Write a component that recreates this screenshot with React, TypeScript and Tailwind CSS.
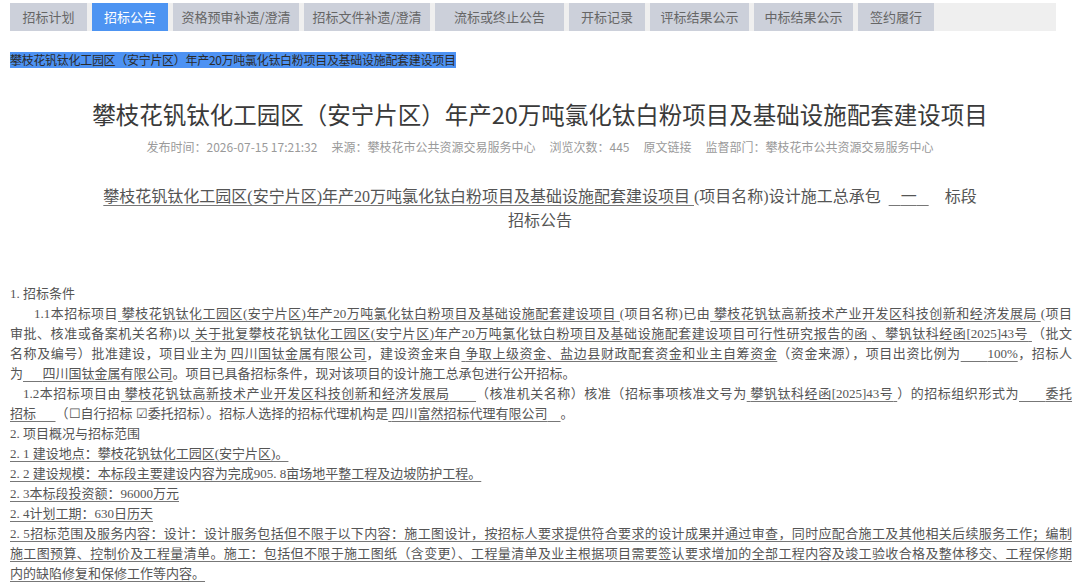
import React from 'react';

const tabs = [
  { label: '招标计划', w: 'w-[77px]' },
  { label: '招标公告', w: 'w-[76px]', active: true },
  { label: '资格预审补遗/澄清', w: 'w-[126px]' },
  { label: '招标文件补遗/澄清', w: 'w-[126px]' },
  { label: '流标或终止公告', w: 'w-[129px]' },
  { label: '开标记录', w: 'w-[76px]' },
  { label: '评标结果公示', w: 'w-[99px]' },
  { label: '中标结果公示', w: 'w-[99px]' },
  { label: '签约履行', w: 'w-[76px]' },
];

const sans = "font-['Microsoft_YaHei','Noto_Sans_CJK_SC',sans-serif]";

// underlined span, as in the original document
const U = ({ children }: { children: React.ReactNode }) => (
  <span className="underline decoration-[#777] decoration-1 underline-offset-[3px]">{children}</span>
);

const Line = ({ children, full = false, indent = '' }: { children: React.ReactNode; full?: boolean; indent?: string }) => (
  <div className={`${full ? 'text-justify [text-align-last:justify]' : ''} ${indent}`}>{children}</div>
);

const sp = (n: number) => '\u00a0'.repeat(n);

const App = () => {
  return (
    <div className="w-[1080px] h-[585px] overflow-hidden bg-white">
      {/* Tabs */}
      <div className={`mt-[3px] ml-[10px] w-[1046px] h-[28px] bg-[#efefef] flex gap-[5px] ${sans}`}>
        {tabs.map((t) => (
          <div
            key={t.label}
            className={`${t.w} h-full flex items-center justify-center text-[13px] ${
              t.active ? 'bg-[#4d94f2] text-white' : 'bg-[#ccd0da] text-[#666]'
            }`}
          >
            {t.label}
          </div>
        ))}
      </div>

      {/* Selected breadcrumb title */}
      <div className={`mt-[21px] ml-[10px] h-[16px] leading-[16px] flex ${sans}`}>
        <span className="bg-[#4d92f3] text-[#2b2b2b] text-[12px] leading-[16px] h-[16px] tracking-[-0.3px]">
          攀枝花钒钛化工园区（安宁片区）年产20万吨氯化钛白粉项目及基础设施配套建设项目
        </span>
      </div>

      {/* Heading */}
      <h1 className={`mt-[30px] text-center text-[23.5px] leading-[32px] text-[#3a3a3a] ${sans}`}>
        攀枝花钒钛化工园区（安宁片区）年产20万吨氯化钛白粉项目及基础设施配套建设项目
      </h1>
      <div className={`mt-[8px] text-[12px] leading-[18px] text-[#9a9a9a] flex justify-center gap-[14px] ${sans}`}>
        <span>发布时间：2026-07-15 17:21:32</span>
        <span>来源：攀枝花市公共资源交易服务中心</span>
        <span>浏览次数：445</span>
        <span>原文链接</span>
        <span>监督部门：攀枝花市公共资源交易服务中心</span>
      </div>

      {/* Document */}
      <div className="font-['SimSun','Liberation_Serif','Noto_Sans_CJK_SC',serif] text-[#555]">
        <div className="mt-[29px] text-center text-[16px] leading-[24px]">
          <div>
            <U>攀枝花钒钛化工园区(安宁片区)年产20万吨氯化钛白粉项目及基础设施配套建设项目{sp(1)}</U>
            (项目名称)设计施工总承包{sp(2)}
            <U>{sp(3)}一{sp(3)}</U>
            {sp(4)}标段
          </div>
          <div>招标公告</div>
        </div>

        <div className="mt-[51px] ml-[10px] w-[1062px] text-[13px] leading-[20px]">
          <Line>1. 招标条件</Line>
          <Line full indent="pl-[24px]">
            1.1本招标项目<U>{sp(1)}攀枝花钒钛化工园区(安宁片区)年产20万吨氯化钛白粉项目及基础设施配套建设项目{sp(1)}</U>(项目名称)已由
            <U>{sp(1)}攀枝花钒钛高新技术产业开发区科技创新和经济发展局{sp(1)}</U>(项目
          </Line>
          <Line full>
            审批、核准或备案机关名称)以<U>{sp(1)}关于批复攀枝花钒钛化工园区(安宁片区)年产20万吨氯化钛白粉项目及基础设施配套建设项目可行性研究报告的函{sp(1)}、攀钒钛科经函[2025]43号{sp(1)}</U>（批文
          </Line>
          <Line full>
            名称及编号）批准建设，项目业主为<U>{sp(1)}四川国钛金属有限公司</U>，建设资金来自<U>{sp(1)}争取上级资金、盐边县财政配套资金和业主自筹资金</U>（资金来源），项目出资比例为
            <U>{sp(7)}100%</U>，招标人
          </Line>
          <Line>
            为<U>{sp(6)}四川国钛金属有限公司</U>。项目已具备招标条件，现对该项目的设计施工总承包进行公开招标。
          </Line>
          <Line full indent="pl-[13px]">
            1.2本招标项目由<U>{sp(1)}攀枝花钒钛高新技术产业开发区科技创新和经济发展局{sp(7)}</U>（核准机关名称）核准（招标事项核准文号为
            <U>{sp(1)}攀钒钛科经函[2025]43号{sp(1)}</U>）的招标组织形式为<U>{sp(7)}委托</U>
          </Line>
          <Line>
            <U>招标{sp(6)}</U>（☐自行招标 ☑委托招标）。招标人选择的招标代理机构是<U>{sp(1)}四川富然招标代理有限公司{sp(4)}</U>。
          </Line>
          <Line>2. 项目概况与招标范围</Line>
          <Line><U>2. 1 建设地点：攀枝花钒钛化工园区(安宁片区)。</U></Line>
          <Line><U>2. 2 建设规模：本标段主要建设内容为完成905. 8亩场地平整工程及边坡防护工程。</U></Line>
          <Line><U>2. 3本标段投资额：96000万元</U></Line>
          <Line><U>2. 4计划工期：630日历天</U></Line>
          <Line full>
            <U>2. 5招标范围及服务内容：设计：设计服务包括但不限于以下内容：施工图设计，按招标人要求提供符合要求的设计成果并通过审查，同时应配合施工及其他相关后续服务工作；编制</U>
          </Line>
          <Line full>
            <U>施工图预算、控制价及工程量清单。施工：包括但不限于施工图纸（含变更）、工程量清单及业主根据项目需要签认要求增加的全部工程内容及竣工验收合格及整体移交、工程保修期</U>
          </Line>
          <Line><U>内的缺陷修复和保修工作等内容。</U></Line>
        </div>
      </div>
    </div>
  );
};

export default App;
